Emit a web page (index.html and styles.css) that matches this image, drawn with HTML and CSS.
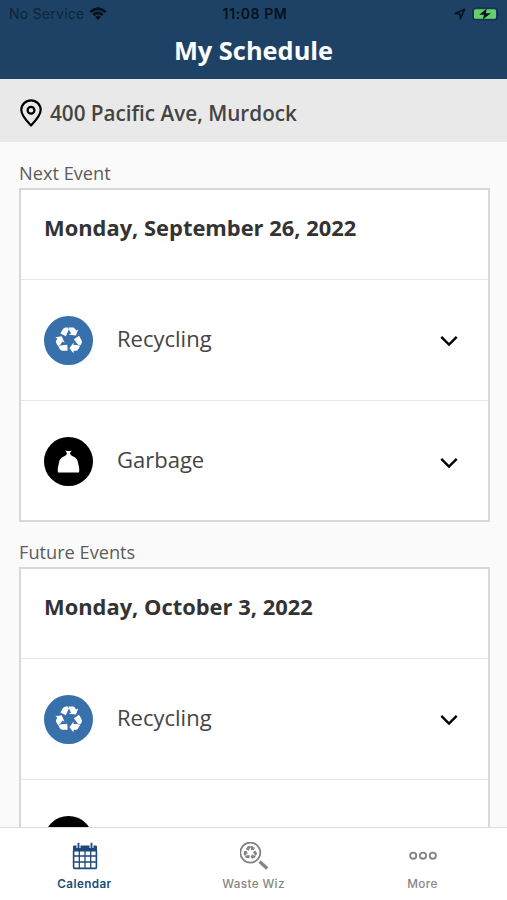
FILE: index.html
```
<!DOCTYPE html>
<html lang="en">
<head>
  <meta charset="UTF-8" />
  <meta name="viewport" content="width=device-width, initial-scale=1" />
  <title>My Schedule</title>
  <link rel="stylesheet" href="styles.css">
</head>
<body>
<!-- shared icons -->
<svg class="sprite" aria-hidden="true">
  <symbol id="recycle" viewBox="-14 -14 28 28">
    <g id="recycleArrow">
      <path d="M-8.6-6.6 L-6-11 Q-5-12.6-3.2-12.6 H-1.2 L-.2-10.6 L-3.2-3.8Z" />
      <path d="M-.4-12.6 H3.7 Q5.2-12.6 6-11.2 L7-9.4 L9.2-10.4 L6.9-4.4 L-.2-5.2 L2-6.4 L.4-9.4Z" />
    </g>
    <use href="#recycleArrow" transform="rotate(120)" />
    <use href="#recycleArrow" transform="rotate(240)" />
  </symbol>
  <symbol id="bag" viewBox="0 0 24 24">
    <path d="M8.7 .4 Q12 1.6 15.3 .4 L13.6 3.4 Q13.6 5.4 16.4 6.4 Q22 8.8 22.2 14.5 Q23.8 20.5 22.9 23.4 H1.1 Q.2 20.5 1.8 14.5 Q2 8.8 7.6 6.4 Q10.4 5.4 10.4 3.4Z" />
  </symbol>
  <symbol id="chevron" viewBox="0 0 18 12">
    <path d="M1.3 1.8 L9 9.5 L16.7 1.8" fill="none" stroke="#000" stroke-width="2.4" />
  </symbol>
</svg>

<header class="header">
  <div class="status-bar">
    <div class="carrier">
      <span>No Service</span>
      <svg class="wifi" viewBox="0 0 18 13">
        <path d="M.4 4 Q9-3.4 17.6 4 L15.7 6 Q9 .4 2.3 6Z" />
        <path d="M3.3 7 Q9 2.2 14.7 7 L12.8 9 Q9 5.8 5.2 9Z" />
        <path d="M6.2 10 Q9 7.6 11.8 10 L9 12.9Z" />
      </svg>
    </div>
    <span class="time">11:08 PM</span>
    <div class="power">
      <svg class="location" viewBox="0 0 12 12">
        <path d="M1 5.6 L10.6 1.2 L6.4 10.8 L6 6Z" fill="none" stroke="#05111d" stroke-width="1.5" stroke-linejoin="round" />
      </svg>
      <svg class="battery" viewBox="0 0 29 14">
        <rect x=".7" y="1" width="24.6" height="12" rx="3" fill="none" stroke="#102f4c" stroke-width="1.2" />
        <rect x="2" y="2.2" width="22" height="9.6" rx="1.6" fill="#65cf68" />
        <path d="M14.8 1.4 L7.2 7.8 H12 L10.8 12.6 L18.8 6.2 H13.8Z" fill="#05111d" />
        <path d="M26.8 5 Q28.2 7 26.8 9Z" fill="#102f4c" />
      </svg>
    </div>
  </div>
  <h1>My Schedule</h1>
</header>

<div class="address">
  <svg class="pin" viewBox="0 0 22 28" fill="none" stroke="#000" stroke-width="2.2">
    <path d="M11 26.5 Q1.3 16.5 1.3 11 A9.7 9.7 0 0 1 20.7 11 Q20.7 16.5 11 26.5Z" stroke-linejoin="round" />
    <circle cx="11" cy="11.3" r="3.4" />
  </svg>
  <span>400 Pacific Ave, Murdock</span>
</div>

<main class="events">
  <h2>Next Event</h2>
  <section class="card">
    <h3>Monday, September 26, 2022</h3>
    <div class="row">
      <div class="badge recycling"><svg><use href="#recycle" /></svg></div>
      <span class="name">Recycling</span>
      <svg class="chevron"><use href="#chevron" /></svg>
    </div>
    <div class="row">
      <div class="badge garbage"><svg><use href="#bag" /></svg></div>
      <span class="name">Garbage</span>
      <svg class="chevron"><use href="#chevron" /></svg>
    </div>
  </section>

  <h2>Future Events</h2>
  <section class="card">
    <h3>Monday, October 3, 2022</h3>
    <div class="row">
      <div class="badge recycling"><svg><use href="#recycle" /></svg></div>
      <span class="name">Recycling</span>
      <svg class="chevron"><use href="#chevron" /></svg>
    </div>
    <div class="row">
      <div class="badge garbage"><svg><use href="#bag" /></svg></div>
    </div>
  </section>
</main>

<nav class="tabs">
  <a class="tab active">
    <svg viewBox="0 0 28 28" fill="none" stroke="currentColor">
      <path d="M2.5 4 H25.5 V9 H2.5Z" fill="currentColor" />
      <path d="M7.5 1 V6 M20.5 1 V6" stroke="#fff" stroke-width="4" />
      <path d="M7.5 .8 V6.5 M20.5 .8 V6.5" stroke-width="1.8" />
      <rect x="2.6" y="8" width="22.8" height="18.4" rx="1" stroke-width="1.6" />
      <path d="M8.3 9 V26 M14 9 V26 M19.7 9 V26 M3 14 H25 M3 20 H25" stroke-width="1.3" />
    </svg>
    <span>Calendar</span>
  </a>
  <a class="tab">
    <svg viewBox="0 0 28 28" fill="none" stroke="currentColor">
      <circle cx="10.3" cy="10.6" r="10" stroke-width="1.8" />
      <use href="#recycle" x="3.1" y="3.4" width="14.4" height="14.4" fill="currentColor" stroke="none" />
      <path d="M19.6 19.4 L27.2 26.6" stroke-width="3.4" />
    </svg>
    <span>Waste Wiz</span>
  </a>
  <a class="tab">
    <svg viewBox="0 0 28 28" fill="none" stroke="currentColor" stroke-width="1.9">
      <circle cx="4.2" cy="13.7" r="3.1" />
      <circle cx="14" cy="13.7" r="3.1" />
      <circle cx="23.8" cy="13.7" r="3.1" />
    </svg>
    <span>More</span>
  </a>
</nav>
</body>
</html>
```
FILE: styles.css
```
* {
  box-sizing: border-box;
}
body {
  margin: 0;
  height: 900px;
  overflow: hidden;
  display: flex;
  flex-direction: column;
  background: #fafafa;
  color: #444;
  font-family: "Open Sans", sans-serif;
}
h1, h2, h3 {
  margin: 0;
}
.sprite {
  position: absolute;
  width: 0;
  height: 0;
}

/* header */
.header {
  flex: none;
  height: 79px;
  background: #1d4266;
}
.status-bar {
  display: grid;
  grid-template-columns: 1fr auto 1fr;
  align-items: center;
  height: 27px;
  padding: 0 6px 0 9px;
  color: #05111d;
  font-family: Inter, sans-serif;
  font-size: 14px;
}
.carrier {
  display: flex;
  align-items: center;
  gap: 5px;
  color: #0d2439;
  letter-spacing: 0.25px;
}
.wifi {
  width: 18px;
  height: 13px;
  fill: #05111d;
}
.time {
  font-weight: 600;
  letter-spacing: 0.6px;
}
.power {
  display: flex;
  align-items: center;
  justify-content: flex-end;
  gap: 6px;
}
.location {
  width: 12px;
  height: 12px;
}
.battery {
  width: 29px;
  height: 14px;
}
h1 {
  color: #fff;
  font-size: 25.4px;
  font-weight: 700;
  line-height: 46px;
  text-align: center;
}

/* address bar */
.address {
  flex: none;
  display: flex;
  align-items: center;
  gap: 8px;
  height: 63px;
  padding: 4px 20px 0;
  background: #e9e9e9;
  font-size: 20.7px;
  font-weight: 600;
}
.pin {
  width: 22px;
  height: 28px;
}

/* events */
.events {
  flex: 1;
  min-height: 0;
  overflow: hidden;
  padding: 16px 17px 0 19px;
}
h2 {
  height: 30px;
  color: #5c5c5c;
  font-size: 18.2px;
  font-weight: 400;
  line-height: 30px;
}
.card {
  margin-bottom: 15px;
  border: 2px solid #d8d8d8;
  background: #fff;
}
h3 {
  height: 89px;
  padding: 21px 23px 0;
  color: #333;
  font-size: 21.9px;
  font-weight: 700;
  line-height: 34px;
}
.row {
  display: flex;
  align-items: center;
  height: 121px;
  padding: 0 30px 0 23px;
  border-top: 1px solid #e6e6e6;
}
.row:last-child {
  height: 120px;
  padding-top: 2px;
}
.badge {
  display: flex;
  align-items: center;
  justify-content: center;
  width: 49px;
  height: 49px;
  margin-right: 24px;
  border-radius: 50%;
  fill: #fff;
}
.recycling {
  background: #3870ab;
}
.recycling svg {
  width: 28px;
  height: 28px;
}
.garbage {
  background: #000;
}
.garbage svg {
  width: 23px;
  height: 23px;
}
.name {
  flex: 1;
  padding-bottom: 5px;
  font-size: 22px;
}
.chevron {
  width: 18px;
  height: 12px;
  margin-top: 2px;
}

/* bottom tabs */
.tabs {
  flex: none;
  display: grid;
  grid-template-columns: repeat(3, 1fr);
  height: 73px;
  border-top: 1px solid #ddd;
  background: #fff;
}
.tab {
  display: flex;
  flex-direction: column;
  align-items: center;
  padding-top: 14px;
  color: #858585;
  font-family: Inter, sans-serif;
  font-size: 11.7px;
  font-weight: 500;
  letter-spacing: 0.4px;
}
.tab svg {
  width: 28px;
  height: 28px;
  margin-bottom: 7px;
}
.active {
  color: #1d4a7b;
  font-weight: 600;
}
```
